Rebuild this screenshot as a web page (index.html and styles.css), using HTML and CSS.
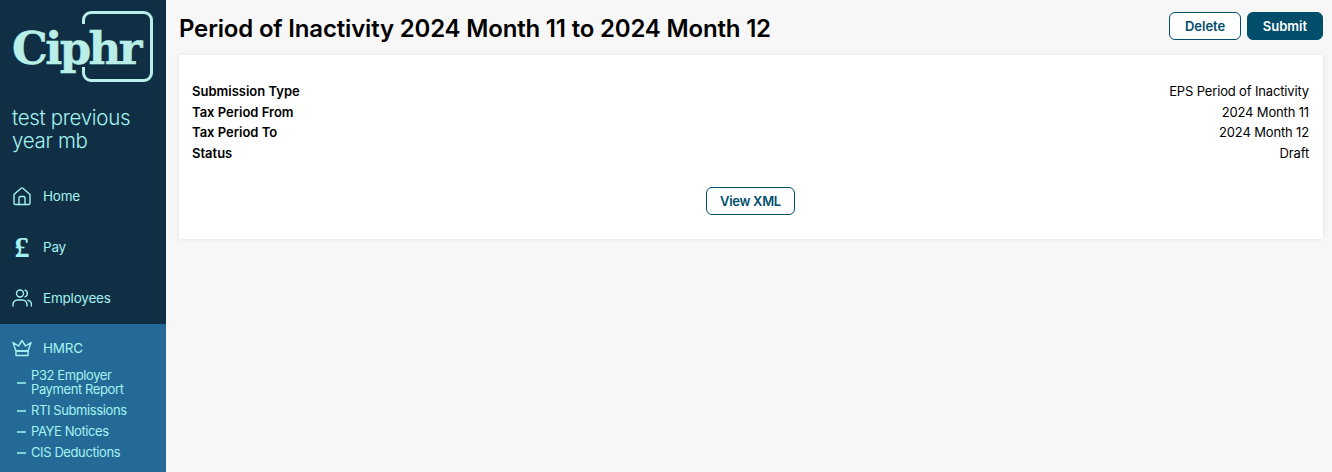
FILE: index.html
```html
<!DOCTYPE html>
<html lang="en">
<head>
    <meta charset="UTF-8">
    <title>Period of Inactivity</title>
    <link rel="stylesheet" href="styles.css">
</head>
<body>
    <aside class="sidebar">
        <div class="logo">
            <span class="logo-text">Ciphr</span>
            <span class="logo-box"></span>
        </div>
        <div class="company">test previous year mb</div>
        <nav class="nav">
            <a class="nav-item">
                <svg class="nav-icon" viewBox="0 0 20 20"><path d="M2 8.500 8.800 2.400a1.800 1.800 0 0 1 2.400 0L18 8.500V17a1.500 1.500 0 0 1-1.500 1.500h-13A1.500 1.500 0 0 1 2 17z"/><path d="M7 18.500V12a1.500 1.500 0 0 1 1.500-1.500h3A1.500 1.500 0 0 1 13 12v6.500"/></svg>
                Home
            </a>
            <a class="nav-item">
                <span class="nav-icon pound">£</span>
                Pay
            </a>
            <a class="nav-item">
                <svg class="nav-icon" viewBox="0 0 20 20"><circle cx="8" cy="5.500" r="3.500"/><path d="M1 18v-1.500a4.500 4.500 0 0 1 4.500-4.500h5a4.500 4.500 0 0 1 4.500 4.500V18"/><path d="M13 2.200a3.500 3.500 0 0 1 0 6.600"/><path d="M16 12.300a4.500 4.500 0 0 1 3.500 4.200V18"/></svg>
                Employees
            </a>
        </nav>
        <div class="nav-group">
            <a class="nav-item nav-item-group">
                <svg class="nav-icon" viewBox="0 0 20 20"><path d="M4 13 1 4.500 6.500 8 10 2.500 13.500 8 19 4.500 16 13z"/><path d="M4 13h12v4.500H4z"/></svg>
                HMRC
            </a>
            <ul class="sub-list">
                <li>P32 Employer Payment Report</li>
                <li>RTI Submissions</li>
                <li>PAYE Notices</li>
                <li>CIS Deductions</li>
            </ul>
        </div>
    </aside>
    <main class="main">
        <header class="page-header">
            <h1>Period of Inactivity 2024 Month 11 to 2024 Month 12</h1>
            <div class="actions">
                <button class="btn">Delete</button>
                <button class="btn btn-primary">Submit</button>
            </div>
        </header>
        <section class="card">
            <dl class="details">
                <div class="row"><dt>Submission Type</dt><dd>EPS Period of Inactivity</dd></div>
                <div class="row"><dt>Tax Period From</dt><dd>2024 Month 11</dd></div>
                <div class="row"><dt>Tax Period To</dt><dd>2024 Month 12</dd></div>
                <div class="row"><dt>Status</dt><dd>Draft</dd></div>
            </dl>
            <div class="card-footer">
                <button class="btn btn-xml">View XML</button>
            </div>
        </section>
    </main>
</body>
</html>
```

FILE: styles.css
```css
* {
    box-sizing: border-box;
}

html, body {
    height: 100%;
}

body {
    margin: 0;
    display: flex;
    background-color: #f7f7f7;
    color: #000;
    font-family: 'Inter', 'Noto Sans', sans-serif;
    overflow: hidden;
}

/* Sidebar */
.sidebar {
    width: 166px;
    flex-shrink: 0;
    display: flex;
    flex-direction: column;
    background-color: #102f44;
    color: #a5f3f0;
}

.logo {
    position: relative;
    height: 82px;
    margin: 11px 0 0 12px;
    width: 141px;
}

.logo-text {
    display: block;
    padding-top: 12px;
    font-family: 'DejaVu Serif', serif;
    font-weight: 700;
    font-size: 45px;
    line-height: 52px;
    letter-spacing: -2.6px;
    -webkit-text-stroke: 0.5px #b9efe8;
    color: #b9efe8;
}

.logo-box {
    position: absolute;
    top: 0;
    right: 0;
    width: 71px;
    height: 71px;
    border: 3px solid #b9efe8;
    border-radius: 9px;
    clip-path: polygon(0 0, 100% 0, 100% 100%, 0 100%, 0 56px, 6px 56px, 6px 13px, 0 13px);
}

.company {
    margin-top: 13px;
    padding: 0 12px;
    font-size: 20.5px;
    line-height: 23px;
    font-weight: 300;
    letter-spacing: -0.3px;
}

.nav {
    margin-top: 18px;
    margin-bottom: 1px;
    display: flex;
    flex-direction: column;
}

.nav-item {
    height: 51px;
    display: flex;
    align-items: center;
    gap: 11px;
    padding-left: 12px;
    font-size: 13.5px;
    letter-spacing: -0.2px;
}

.nav-icon {
    width: 20px;
    height: 20px;
    flex-shrink: 0;
    fill: none;
    stroke: currentColor;
    stroke-width: 1.4;
    stroke-linejoin: round;
    stroke-linecap: round;
}

.pound {
    font-family: 'Liberation Serif', serif;
    font-weight: 700;
    font-size: 30px;
    line-height: 20px;
    text-align: center;
}

.nav-group {
    flex: 1;
    background-color: #236a97;
}

.nav-item-group {
    height: 40px;
    margin-top: 4px;
}

.sub-list {
    list-style: none;
    margin: 0;
    padding: 0 0 0 31px;
    font-size: 13px;
    line-height: 14px;
    letter-spacing: -0.4px;
    font-weight: 400;
}

.sub-list li {
    position: relative;
    margin-bottom: 7px;
    padding-right: 25px;
}

.sub-list li::before {
    content: "";
    position: absolute;
    left: -14px;
    top: 50%;
    width: 9px;
    height: 2px;
    background-color: #7fd3d8;
}

/* Main */
.main {
    flex: 1;
    min-width: 0;
    padding: 12px 9px 0 13px;
}

.page-header {
    display: flex;
    justify-content: space-between;
    align-items: flex-start;
    height: 43px;
}

h1 {
    margin: 0;
    font-size: 24px;
    line-height: 34px;
    font-weight: 600;
    letter-spacing: -0.18px;
}

.actions {
    display: flex;
    gap: 6px;
}

.btn {
    height: 28px;
    padding: 0 14.5px;
    border: 1px solid #004e6a;
    border-radius: 6px;
    background-color: #fff;
    color: #004e6a;
    font-family: inherit;
    font-size: 13px;
    font-weight: 600;
}

.btn-primary {
    padding: 0 15px;
    background-color: #004e6a;
    color: #fff;
}

.btn-xml {
    padding: 0 13.5px;
    letter-spacing: -0.3px;
}

.card {
    height: 184px;
    padding: 26px 14px 0 13px;
    background-color: #fff;
    box-shadow: 0 0 6px rgba(0, 0, 0, 0.08);
}

.details {
    margin: 0;
    font-size: 13px;
    line-height: 20.6px;
}

.row {
    display: flex;
    justify-content: space-between;
}

dt {
    font-weight: 600;
}

dd {
    margin: 0;
    letter-spacing: -0.15px;
}

.card-footer {
    margin-top: 24px;
    display: flex;
    justify-content: center;
}
```
